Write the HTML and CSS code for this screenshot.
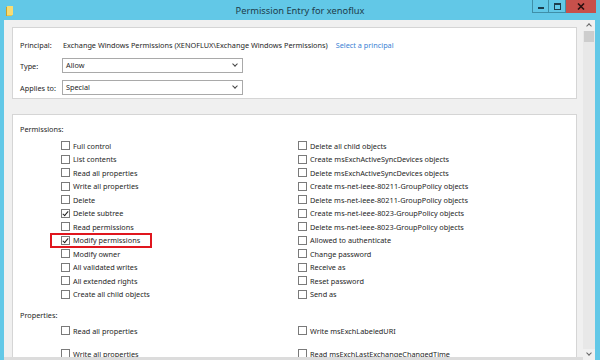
FILE: index.html
```html
<!DOCTYPE html>
<html lang="en">
<head>
  <meta charset="UTF-8" />
  <title>Permission Entry for xenoflux</title>
  <link rel="stylesheet" href="styles.css">
</head>
<body>
  <div class="window">
    <div class="titlebar">
      <svg class="app-icon" width="7" height="10" viewBox="0 0 7 10">
        <rect x="0" y="1" width="6" height="9" fill="#e8c547"/>
        <rect x="1" y="0" width="6" height="9" fill="#f6dc74"/>
        <rect x="0" y="1" width="1" height="9" fill="#c9a02a"/>
      </svg>
      <div class="title">Permission Entry for xenoflux</div>
      <div class="caption-buttons">
        <div class="cap-btn min"><span class="min-bar"></span></div>
        <div class="cap-btn max"><span class="max-box"></span></div>
        <div class="cap-btn close">
          <svg width="8" height="7" viewBox="0 0 8 7">
            <path d="M1 0.5 L7 6.5 M7 0.5 L1 6.5" stroke="#2a1010" stroke-width="1.6"/>
          </svg>
        </div>
      </div>
    </div>

    <div class="frame-body">
      <div class="client">
        <div class="panel top-panel">
          <div class="field principal">
            <span class="label">Principal:</span>
            <span class="value">Exchange Windows Permissions (XENOFLUX\Exchange Windows Permissions)</span>
            <a class="link">Select a principal</a>
          </div>
          <div class="field">
            <span class="label">Type:</span>
            <div class="select">Allow<span class="chev"></span></div>
          </div>
          <div class="field">
            <span class="label">Applies to:</span>
            <div class="select">Special<span class="chev"></span></div>
          </div>
        </div>

        <div class="panel perms-panel">
          <div class="section-title">Permissions:</div>
          <div class="perm-grid">
            <div class="col">
              <label class="check"><span class="box"></span>Full control</label>
              <label class="check"><span class="box"></span>List contents</label>
              <label class="check"><span class="box"></span>Read all properties</label>
              <label class="check"><span class="box"></span>Write all properties</label>
              <label class="check"><span class="box"></span>Delete</label>
              <label class="check"><span class="box checked"></span>Delete subtree</label>
              <label class="check"><span class="box"></span>Read permissions</label>
              <label class="check highlight"><span class="box checked"></span>Modify permissions</label>
              <label class="check"><span class="box"></span>Modify owner</label>
              <label class="check"><span class="box"></span>All validated writes</label>
              <label class="check"><span class="box"></span>All extended rights</label>
              <label class="check"><span class="box"></span>Create all child objects</label>
            </div>
            <div class="col">
              <label class="check"><span class="box"></span>Delete all child objects</label>
              <label class="check"><span class="box"></span>Create msExchActiveSyncDevices objects</label>
              <label class="check"><span class="box"></span>Delete msExchActiveSyncDevices objects</label>
              <label class="check"><span class="box"></span>Create ms-net-ieee-80211-GroupPolicy objects</label>
              <label class="check"><span class="box"></span>Delete ms-net-ieee-80211-GroupPolicy objects</label>
              <label class="check"><span class="box"></span>Create ms-net-ieee-8023-GroupPolicy objects</label>
              <label class="check"><span class="box"></span>Delete ms-net-ieee-8023-GroupPolicy objects</label>
              <label class="check"><span class="box"></span>Allowed to authenticate</label>
              <label class="check"><span class="box"></span>Change password</label>
              <label class="check"><span class="box"></span>Receive as</label>
              <label class="check"><span class="box"></span>Reset password</label>
              <label class="check"><span class="box"></span>Send as</label>
            </div>
          </div>

          <div class="section-title props">Properties:</div>
          <div class="perm-grid props-grid">
            <div class="col">
              <label class="check"><span class="box"></span>Read all properties</label>
              <label class="check"><span class="box"></span>Write all properties</label>
            </div>
            <div class="col">
              <label class="check"><span class="box"></span>Write msExchLabeledURI</label>
              <label class="check"><span class="box"></span>Read msExchLastExchangeChangedTime</label>
            </div>
          </div>
        </div>
      </div>

      <div class="scrollbar">
        <div class="arrow up"></div>
        <div class="thumb"></div>
        <div class="track"></div>
        <div class="arrow down"></div>
      </div>
    </div>
  </div>
</body>
</html>
```

FILE: styles.css
```css
html, body {
  margin: 0;
  height: 100%;
  overflow: hidden;
}

body {
  font-family: "Noto Sans", "Open Sans", sans-serif;
  font-size: 7.3px;
  color: #1e1e1e;
  background: #62c8e7;
}

.window {
  width: 600px;
  height: 360px;
  display: flex;
  flex-direction: column;
  background: #62c8e7;
}

.titlebar {
  height: 20px;
  display: flex;
  align-items: flex-start;
  position: relative;
  flex-shrink: 0;
}

.app-icon {
  margin: 6px 0 0 6px;
}

.title {
  position: absolute;
  left: 0;
  right: 0;
  top: 4px;
  text-align: center;
  font-size: 9.3px;
  color: #1d3c4b;
}

.caption-buttons {
  margin-left: auto;
  margin-right: 4px;
  display: flex;
  height: 13px;
}

.cap-btn {
  display: flex;
  align-items: center;
  justify-content: center;
  height: 13px;
  box-sizing: border-box;
}

.cap-btn.min,
.cap-btn.max {
  width: 17px;
  border: 1px solid #3f8fa8;
  border-top: none;
}

.cap-btn.max {
  border-left: none;
}

.min-bar {
  width: 6px;
  height: 2px;
  background: #1d3c4b;
  margin-top: 4px;
}

.max-box {
  width: 5px;
  height: 4px;
  border: 1px solid #1d3c4b;
  border-top-width: 2px;
}

.cap-btn.close {
  width: 30px;
  background: #c7504b;
}

.frame-body {
  flex: 1;
  display: flex;
  min-height: 0;
  padding-left: 4px;
}

.client {
  flex: 1;
  background: #f0f0f0;
  padding: 7px 6px 0 8px;
  overflow: hidden;
  border-bottom: 3px solid #dcdcdc;
}

.panel {
  background: #fff;
  border: 1px solid #d5d5d5;
}

.top-panel {
  height: 72px;
  box-sizing: border-box;
  padding: 9px 0 0 7px;
}

.field {
  display: flex;
  align-items: center;
  height: 15px;
  margin-bottom: 7px;
}

.field.principal {
  margin-bottom: 6px;
}

.label {
  width: 42px;
  flex-shrink: 0;
}

.value {
  margin-left: 1px;
}

.link {
  color: #3b7fd4;
  margin-left: 8px;
}

.select {
  position: relative;
  width: 181px;
  height: 15px;
  box-sizing: border-box;
  border: 1px solid #a9a9a9;
  padding-left: 3px;
  line-height: 13px;
}

.chev {
  position: absolute;
  right: 5px;
  top: 3px;
  width: 3px;
  height: 3px;
  border-right: 1px solid #444;
  border-bottom: 1px solid #444;
  transform: rotate(45deg);
}

.perms-panel {
  margin-top: 15px;
  height: 260px;
  padding: 8px 0 0 7px;
}

.section-title {
  height: 13px;
  line-height: 13px;
}

.perm-grid {
  display: grid;
  grid-template-columns: 237px auto;
  margin-left: 41px;
  margin-top: 3px;
}

.check {
  display: flex;
  align-items: center;
  height: 13.5px;
  position: relative;
}

.box {
  width: 7px;
  height: 7px;
  border: 1px solid #7a7a7a;
  background: #fff;
  margin-right: 3px;
  position: relative;
  flex-shrink: 0;
}

.box.checked::after {
  content: "";
  position: absolute;
  left: 2px;
  top: 0;
  width: 2px;
  height: 5px;
  border-right: 1.5px solid #222;
  border-bottom: 1.5px solid #222;
  transform: rotate(40deg);
}

.check.highlight::before {
  content: "";
  position: absolute;
  left: -11px;
  top: -1px;
  width: 98px;
  height: 11px;
  border: 2px solid #e0161e;
}

.section-title.props {
  margin-top: 8px;
}

.props-grid .check {
  height: 23px;
}

.props-grid {
  margin-top: -3px;
}

.scrollbar {
  width: 12px;
  display: flex;
  flex-direction: column;
  background: #e8e8e8;
  margin-right: 5px;
}

.arrow {
  height: 11px;
  position: relative;
  background: #f0f0f0;
}

.arrow::after {
  content: "";
  position: absolute;
  left: 4px;
  width: 3px;
  height: 3px;
  border-left: 1px solid #666;
  border-top: 1px solid #666;
}

.arrow.up::after {
  top: 4px;
  transform: rotate(45deg);
}

.arrow.down::after {
  top: 2px;
  transform: rotate(225deg);
}

.thumb {
  height: 11px;
  background: #cdcdcd;
  margin: 0 1px;
}

.track {
  flex: 1;
}
```
